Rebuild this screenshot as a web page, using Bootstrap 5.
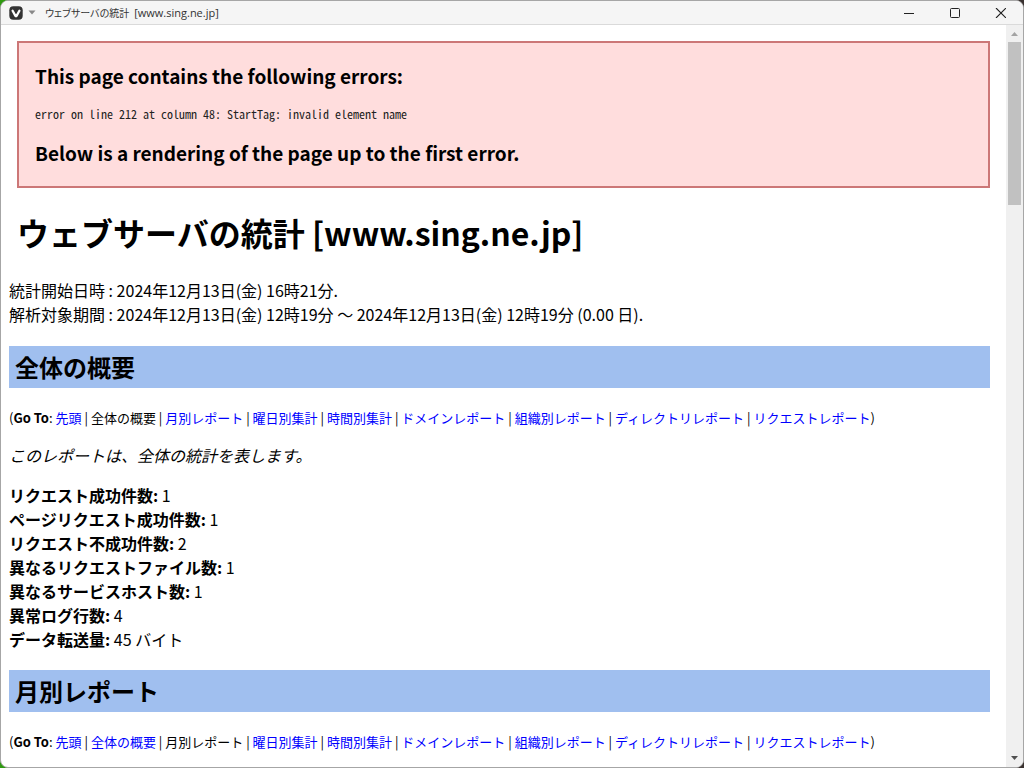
<!DOCTYPE html>
<html lang="ja">
<head>
<meta charset="utf-8">
<meta name="viewport" content="width=device-width, initial-scale=1">
<title>ウェブサーバの統計 [www.sing.ne.jp]</title>
<link href="https://cdn.jsdelivr.net/npm/bootstrap@5.3.0/dist/css/bootstrap.min.css" rel="stylesheet">
<style>
body { background: linear-gradient(90deg, #2f9a10 0 50%, #3a3230 50%); font-family: "Noto Sans CJK JP", sans-serif; color: #000; }
.app-window { border: 1px solid #a6a6a6; border-radius: 8px; }
.titlebar { height: 24px; background: #f5f5f5; border-bottom: 1px solid #dadada; }
.app-menu { gap: 5px; }
.caption { font-size: 11px; line-height: 20px; color: #333; padding-left: 9px; }
.caption-kana { font-size: 10px; font-feature-settings: "palt"; }
.caption-host { font-family: "Open Sans", sans-serif; }
.win-btn { width: 46px; height: 23px; }
.page { padding: 16px 16px 0 8px; line-height: 24px; }
.error-box { margin-left: 8px; padding: 0 16px; background: #fdd; border: 2px solid #c77; }
.error-box h3 { font-size: 19px; line-height: 28px; margin: 19px 0 16px; font-weight: 700; }
.error-box h3:last-child { margin-top: 17px; margin-bottom: 19px; }
.error-text { font-family: "Noto Sans Mono CJK JP", "Liberation Mono", monospace; font-size: 12px; line-height: 16px; color: #222; }
.page h1 { font-size: 32px; line-height: 48px; margin: 20px 0 22px 8px; font-weight: 700; }
.page h2 { font-size: 24px; line-height: 36px; padding: 3px 6px; margin: 19px 0; background: #a0bfef; font-weight: 700; }
.run-info { margin-bottom: 20px; }
.jump-list { font-size: 13px; line-height: 22px; margin-bottom: 14px; }
.jump-list b, .totals b { font-weight: 700; }
.page a { color: #00f; }
.scroll-rail { width: 17px; background: #f0f0f0; }
.scroll-thumb { width: 13px; height: 163px; background: #c1c1c1; }
</style>
</head>
<body>
<div class="app-window vh-100 d-flex flex-column overflow-hidden bg-white">
  <header class="titlebar d-flex align-items-center flex-shrink-0">
    <button class="app-menu btn p-0 border-0 d-flex align-items-center ms-2" type="button" aria-label="メニュー">
      <svg width="14" height="14" viewBox="0 0 14 14"><rect x=".3" y=".3" width="13.4" height="13.4" rx="4" fill="#333"/><path d="M3.600 4.800 6.400 9.800q.6.800 1.200 0L10.400 4.800" fill="none" stroke="#fff" stroke-width="2.300" stroke-linecap="round"/></svg>
      <svg width="8" height="5" viewBox="0 0 8 5"><path d="M.5.5h7L4 4.500z" fill="#888"/></svg>
    </button>
    <div class="caption text-nowrap me-auto"><span class="caption-kana">ウェブサーバの統計</span>&nbsp; <span class="caption-host">[www.sing.ne.jp]</span></div>
    <button class="win-btn btn p-0 border-0 d-flex align-items-center justify-content-center" type="button" aria-label="最小化"><svg width="12" height="10"><path d="M2 5.500h10" stroke="#222"/></svg></button>
    <button class="win-btn btn p-0 border-0 d-flex align-items-center justify-content-center" type="button" aria-label="最大化"><svg width="12" height="10"><rect x="2.500" y=".5" width="9" height="9" rx="1" fill="none" stroke="#222"/></svg></button>
    <button class="win-btn btn p-0 border-0 d-flex align-items-center justify-content-center" type="button" aria-label="閉じる"><svg width="12" height="10"><path d="M2 0l10 10M12 0 2 10" stroke="#222" stroke-width="1.100"/></svg></button>
  </header>
  <div class="d-flex flex-grow-1 overflow-hidden">
    <main class="page flex-grow-1 overflow-hidden">
      <section class="error-box">
        <h3>This page contains the following errors:</h3>
        <div class="error-text">error on line 212 at column 48: StartTag: invalid element name</div>
        <h3>Below is a rendering of the page up to the first error.</h3>
      </section>
      <h1 id="top">ウェブサーバの統計 [www.sing.ne.jp]</h1>
      <p class="run-info">統計開始日時 : 2024年12月13日(金) 16時21分.<br>解析対象期間 : 2024年12月13日(金) 12時19分 ～ 2024年12月13日(金) 12時19分 (0.00 日).</p>
      <h2 id="general">全体の概要</h2>
      <p class="jump-list">(<b>Go To</b>: <a class="text-decoration-none" href="#top">先頭</a> | 全体の概要 | <a class="text-decoration-none" href="#monthly">月別レポート</a> | <a class="text-decoration-none" href="#daily">曜日別集計</a> | <a class="text-decoration-none" href="#hourly">時間別集計</a> | <a class="text-decoration-none" href="#domain">ドメインレポート</a> | <a class="text-decoration-none" href="#org">組織別レポート</a> | <a class="text-decoration-none" href="#dir">ディレクトリレポート</a> | <a class="text-decoration-none" href="#request">リクエストレポート</a>)</p>
      <p><em>このレポートは、全体の統計を表します。</em></p>
      <p class="totals mb-0"><b>リクエスト成功件数:</b> 1<br><b>ページリクエスト成功件数:</b> 1<br><b>リクエスト不成功件数:</b> 2<br><b>異なるリクエストファイル数:</b> 1<br><b>異なるサービスホスト数:</b> 1<br><b>異常ログ行数:</b> 4<br><b>データ転送量:</b> 45 バイト</p>
      <h2 id="monthly">月別レポート</h2>
      <p class="jump-list">(<b>Go To</b>: <a class="text-decoration-none" href="#top">先頭</a> | <a class="text-decoration-none" href="#general">全体の概要</a> | 月別レポート | <a class="text-decoration-none" href="#daily">曜日別集計</a> | <a class="text-decoration-none" href="#hourly">時間別集計</a> | <a class="text-decoration-none" href="#domain">ドメインレポート</a> | <a class="text-decoration-none" href="#org">組織別レポート</a> | <a class="text-decoration-none" href="#dir">ディレクトリレポート</a> | <a class="text-decoration-none" href="#request">リクエストレポート</a>)</p>
    </main>
    <div class="scroll-rail flex-shrink-0 d-flex flex-column align-items-center justify-content-between" aria-hidden="true">
      <div class="d-flex flex-column align-items-center">
        <svg class="d-block" width="17" height="17"><path d="M5 11h7L8.500 7z" fill="#a3a3a3"/></svg>
        <div class="scroll-thumb"></div>
      </div>
      <svg class="d-block" width="17" height="17"><path d="M5 6h7l-3.500 4z" fill="#505050"/></svg>
    </div>
  </div>
</div>
<script src="https://cdn.jsdelivr.net/npm/bootstrap@5.3.0/dist/js/bootstrap.bundle.min.js"></script>
</body>
</html>
